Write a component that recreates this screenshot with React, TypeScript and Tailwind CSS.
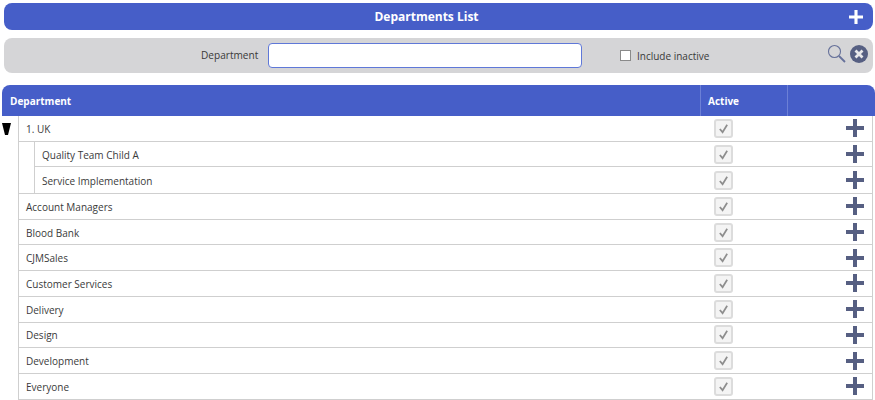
import React from 'react';

const departments = [
  'Account Managers',
  'Blood Bank',
  'CJMSales',
  'Customer Services',
  'Delivery',
  'Design',
  'Development',
  'Everyone',
];

function PlusIcon({ className }: { className: string }) {
  return (
    <svg viewBox="0 0 18 18" className={className} fill="currentColor">
      <path d="M7 0h4v7h7v4h-7v7H7v-7H0V7h7z" />
    </svg>
  );
}

function ActiveCheck() {
  return (
    <span className="flex h-[19px] w-[19px] items-center justify-center rounded-[3px] border-2 border-[#dcdcdc] bg-[#f4f4f4]">
      <svg viewBox="0 0 12 12" className="h-[11px] w-[11px]" fill="none" stroke="#8e8e8e" strokeWidth="1.9">
        <path d="M2 6.5 5 10l5-8" />
      </svg>
    </span>
  );
}

function Row({ name, border = true }: { name: string; border?: boolean }) {
  return (
    <div className={`flex h-[25.7px] items-center ${border ? 'border-b border-[#cfcfcf]' : ''}`}>
      <div className="flex-1 truncate pl-[7px] pt-[2px] text-[10px] text-[#3a3a3a]">{name}</div>
      <div className="flex w-[87px] justify-start pl-[14px]">
        <ActiveCheck />
      </div>
      <div className="flex w-[85px] justify-end pr-[8px]">
        <PlusIcon className="h-[18px] w-[18px] text-[#565f82]" />
      </div>
    </div>
  );
}

export default function App() {
  return (
    <div className="h-[400px] w-[875px] overflow-hidden bg-white font-['Open_Sans','Noto_Sans',sans-serif]">
      <div className="pt-[3px] pl-[4px] pr-[2px]">
        {/* title bar */}
        <div className="flex h-[27px] items-center rounded-lg bg-[#465ec8] pr-[10px]">
          <div className="flex-1 text-center text-[12px] font-bold text-white">Departments List</div>
          <PlusIcon className="h-[14px] w-[14px] text-white" />
        </div>

        {/* search */}
        <div className="mt-[8px] flex h-[35px] items-center rounded-lg bg-[#d5d5d7]">
          <label className="ml-[197px] w-[57px] whitespace-nowrap pt-[1px] text-[10.1px] text-[#3a3a3a]">Department</label>
          <input className="ml-[10px] h-[25px] w-[314px] rounded-[4px] border border-[#5f78d8] bg-white outline-none" />
          <span className="ml-[38px] h-[11px] w-[11px] border border-[#8a8a8a] bg-white" />
          <span className="ml-[6px] mt-[2px] text-[10px] text-[#3a3a3a]">Include inactive</span>
          <div className="ml-auto mr-[5px] mb-[4px] flex items-center gap-[4px]">
            <svg viewBox="0 0 19 19" className="h-[19px] w-[19px]" fill="none" stroke="#66719a">
              <circle cx="7.5" cy="7.5" r="6" strokeWidth="1.1" />
              <path d="m12 12 6 6" strokeWidth="1.8" />
            </svg>
            <svg viewBox="0 0 18 18" className="h-[18px] w-[18px]">
              <circle cx="9" cy="9" r="9" fill="#565f82" />
              <path d="m5.5 5.5 7 7m0-7-7 7" stroke="#e8e8ea" strokeWidth="2.8" />
            </svg>
          </div>
        </div>
      </div>

      {/* table header */}
      <div className="mt-[12px] ml-[2px] flex h-[31px] items-center rounded-t-lg bg-[#465ec8] text-[10px] font-bold text-white">
        <div className="flex-1 pl-[8px] pt-[2px]">Department</div>
        <div className="flex h-full w-[88px] items-center border-x border-[#6c80d6] pl-[7px] pt-[2px]">Active</div>
        <div className="w-[87px]" />
      </div>

      {/* tree */}
      <div className="flex">
        <div className="w-[18px] pl-[2px] pt-[7px]">
          <svg viewBox="0 0 9 12" className="h-[12px] w-[9px]" fill="#000">
            <path d="M0 0h9L6 12H3z" />
          </svg>
        </div>
        <div className="mr-[2px] flex-1 border-x border-[#cfcfcf]">
          <Row name="1. UK" />
          <div className="border-b border-[#cfcfcf] pl-[15px]">
            <div className="border-l border-[#cfcfcf]">
              <Row name="Quality Team Child A" />
              <Row name="Service Implementation" border={false} />
            </div>
          </div>
          {departments.map((d) => (
            <Row key={d} name={d} />
          ))}
        </div>
      </div>
    </div>
  );
}
